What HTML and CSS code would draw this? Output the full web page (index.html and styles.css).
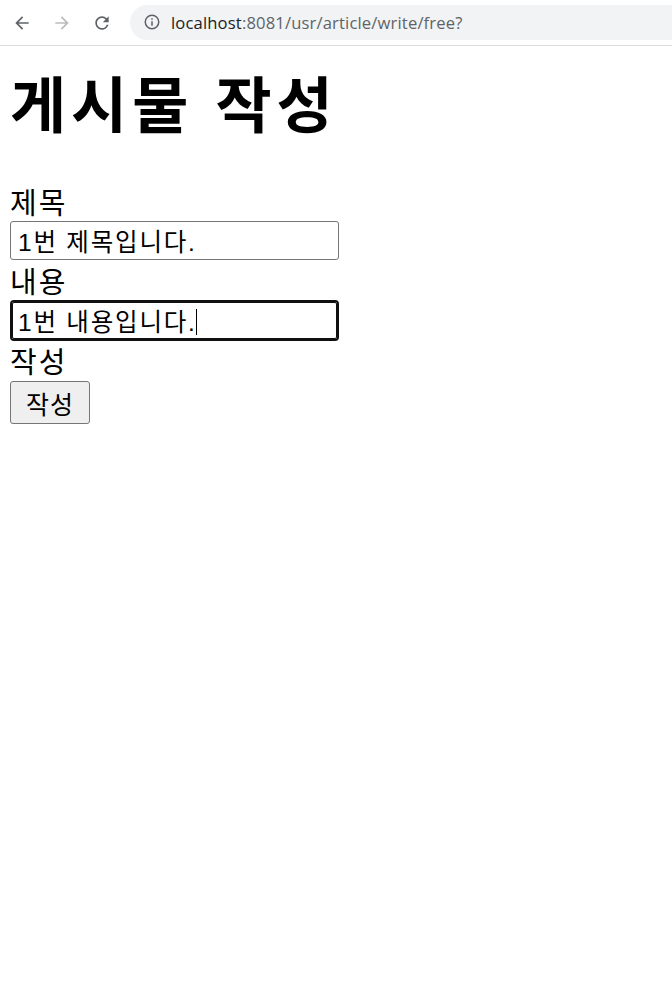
FILE: index.html
```html
<!DOCTYPE html>
<html lang="ko">
<head>
    <meta charset="UTF-8">
    <meta name="viewport" content="width=device-width, initial-scale=1.0">
    <link rel="stylesheet" href="styles.css">
    <title>게시물 작성</title>
</head>
<body>
    <div class="browser-bar">
        <div class="nav-buttons">
            <span class="nav-icon">
                <svg width="20" height="20" viewBox="0 0 24 24"><path d="M20 11H7.83l5.59-5.59L12 4l-8 8 8 8 1.41-1.41L7.83 13H20v-2z" fill="#5f6368"/></svg>
            </span>
            <span class="nav-icon">
                <svg width="20" height="20" viewBox="0 0 24 24"><path d="M12 4l-1.41 1.41L16.17 11H4v2h12.17l-5.58 5.59L12 20l8-8z" fill="#babcbe"/></svg>
            </span>
            <span class="nav-icon">
                <svg width="20" height="20" viewBox="0 0 24 24"><path d="M17.65 6.35A7.958 7.958 0 0 0 12 4c-4.42 0-7.990 3.58-7.99 8s3.57 8 7.99 8c3.73 0 6.84-2.55 7.73-6h-2.08A5.99 5.99 0 0 1 12 18c-3.31 0-6-2.690-6-6s2.690-6 6-6c1.66 0 3.140.69 4.220 1.78L13 11h7V4l-2.35 2.35z" fill="#5f6368"/></svg>
            </span>
        </div>
        <div class="omnibox">
            <svg class="info-icon" width="18" height="18" viewBox="0 0 24 24"><circle cx="12" cy="12" r="9" fill="none" stroke="#5f6368" stroke-width="2"/><rect x="11" y="11" width="2" height="6" fill="#5f6368"/><rect x="11" y="7" width="2" height="2" fill="#5f6368"/></svg>
            <span class="url"><span class="url-host">localhost</span>:8081/usr/article/write/free?</span>
        </div>
    </div>

    <main class="page">
        <h1>게시물 작성</h1>
        <form class="write-form" action="doWrite" method="post">
            <label class="field-label" for="title">제목</label>
            <input class="field-input" type="text" id="title" name="title" value="1번 제목입니다.">
            <label class="field-label" for="body">내용</label>
            <div class="input-wrap">
                <input class="field-input is-focused" type="text" id="body" name="body" value="1번 내용입니다.">
                <span class="caret"></span>
            </div>
            <span class="field-label">작성</span>
            <div>
                <button class="submit-btn" type="submit">작성</button>
            </div>
        </form>
    </main>
</body>
</html>
```

FILE: styles.css
```css
html, body {
    margin: 0;
    padding: 0;
    background: #fff;
    font-family: "Liberation Sans", "Noto Sans CJK KR", sans-serif;
    color: #000;
}

.browser-bar {
    display: flex;
    align-items: center;
    height: 46px;
    border-bottom: 1px solid #dadce0;
    box-sizing: border-box;
}

.nav-buttons {
    display: flex;
    align-items: center;
    gap: 20px;
    padding-left: 12px;
    width: 118px;
}

.nav-icon {
    display: flex;
    width: 20px;
    height: 20px;
}

.omnibox {
    display: flex;
    align-items: center;
    gap: 10px;
    flex: 1;
    height: 35px;
    margin-top: -1px;
    padding-left: 13px;
    background: #f1f3f4;
    border-radius: 18px 0 0 18px;
}

.url {
    font-family: "Open Sans", "Liberation Sans", sans-serif;
    font-size: 16.6px;
    letter-spacing: 0.15px;
    color: #5f6368;
}

.url-host {
    color: #202124;
}

.page {
    padding: 0 10px;
}

h1 {
    font-family: "Noto Sans CJK KR", sans-serif;
    font-weight: 700;
    font-size: 61px;
    line-height: 70px;
    letter-spacing: 5px;
    margin: 21px 0 0 0;
    height: 114px;
}

.write-form {
    display: flex;
    flex-direction: column;
    align-items: flex-start;
}

.field-label {
    font-family: "Noto Sans CJK KR", sans-serif;
    font-size: 29px;
    line-height: 40px;
    letter-spacing: 2px;
    height: 40px;
}

.field-input {
    width: 329px;
    height: 39px;
    box-sizing: border-box;
    margin: 0;
    padding: 0 7px;
    border: 1px solid #767676;
    border-radius: 3px;
    font-family: "Liberation Sans", "Noto Sans CJK KR", sans-serif;
    font-size: 24.5px;
    letter-spacing: 1.8px;
    color: #000;
    background: #fff;
}

.input-wrap {
    position: relative;
    height: 40px;
}

.field-input.is-focused {
    height: 41px;
    border: 2px solid #101010;
    border-radius: 4px;
    padding: 0 6px;
    outline: 1px solid #101010;
    outline-offset: -3px;
}

.caret {
    position: absolute;
    left: 186px;
    top: 9px;
    width: 1px;
    height: 26px;
    background: #000;
}

.submit-btn {
    width: 80px;
    height: 43px;
    margin-top: 1px;
    padding: 0;
    background: #efefef;
    border: 1px solid #767676;
    border-radius: 3px;
    font-family: "Noto Sans CJK KR", sans-serif;
    font-size: 25px;
    letter-spacing: 1px;
    color: #000;
}
```
